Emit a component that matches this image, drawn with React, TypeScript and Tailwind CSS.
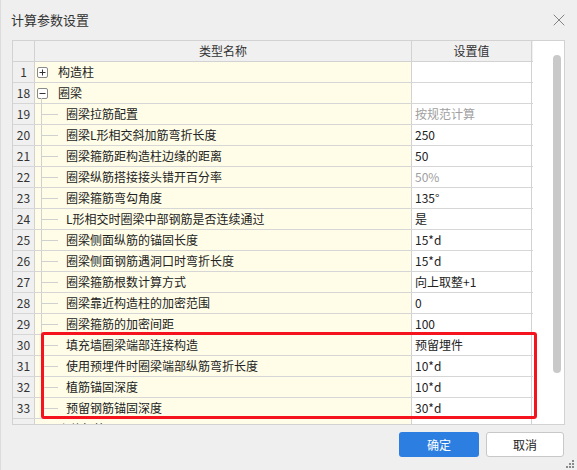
import { X } from 'lucide-react'

type Row = {
  no: number
  name: string
  value?: string
  muted?: boolean
  kind?: 'open' | 'closed' | 'child'
  last?: boolean
}

const rows: Row[] = [
  { no: 1, name: '构造柱', kind: 'closed' },
  { no: 18, name: '圈梁', kind: 'open' },
  { no: 19, name: '圈梁拉筋配置', value: '按规范计算', muted: true, kind: 'child' },
  { no: 20, name: '圈梁L形相交斜加筋弯折长度', value: '250', kind: 'child' },
  { no: 21, name: '圈梁箍筋距构造柱边缘的距离', value: '50', kind: 'child' },
  { no: 22, name: '圈梁纵筋搭接接头错开百分率', value: '50%', muted: true, kind: 'child' },
  { no: 23, name: '圈梁箍筋弯勾角度', value: '135°', kind: 'child' },
  { no: 24, name: 'L形相交时圈梁中部钢筋是否连续通过', value: '是', kind: 'child' },
  { no: 25, name: '圈梁侧面纵筋的锚固长度', value: '15*d', kind: 'child' },
  { no: 26, name: '圈梁侧面钢筋遇洞口时弯折长度', value: '15*d', kind: 'child' },
  { no: 27, name: '圈梁箍筋根数计算方式', value: '向上取整+1', kind: 'child' },
  { no: 28, name: '圈梁靠近构造柱的加密范围', value: '0', kind: 'child' },
  { no: 29, name: '圈梁箍筋的加密间距', value: '100', kind: 'child' },
  { no: 30, name: '填充墙圈梁端部连接构造', value: '预留埋件', kind: 'child' },
  { no: 31, name: '使用预埋件时圈梁端部纵筋弯折长度', value: '10*d', kind: 'child' },
  { no: 32, name: '植筋锚固深度', value: '10*d', kind: 'child' },
  { no: 33, name: '预留钢筋锚固深度', value: '30*d', kind: 'child', last: true },
  { no: 34, name: '砌体加筋', kind: 'closed' },
]

function ToggleBox({ open }: { open: boolean }) {
  return (
    <span className="flex h-[11px] w-[11px] shrink-0 items-center justify-center rounded-[2px] border border-[#8a8a8a] bg-white">
      <svg width="7" height="7" viewBox="0 0 7 7">
        <path d="M0.5 3.5h6" stroke="#333" strokeWidth="1" />
        {!open && <path d="M3.5 0.5v6" stroke="#333" strokeWidth="1" />}
      </svg>
    </span>
  )
}

function NameCell({ row }: { row: Row }) {
  if (row.kind === 'child') {
    return (
      <div className="relative flex h-full items-center pl-[31px]">
        {/* tree guide lines */}
        <span className={`absolute left-[6px] top-0 w-px bg-[#d0d0d0] ${row.last ? 'h-[10px]' : 'h-full'}`} />
        <span className="absolute left-[7px] top-[10px] h-px w-[16px] bg-[#d0d0d0]" />
        <span className="whitespace-nowrap">{row.name}</span>
      </div>
    )
  }
  return (
    <div className="relative flex h-full items-center gap-[10px] pl-[2px]">
      <ToggleBox open={row.kind === 'open'} />
      <span className="whitespace-nowrap">{row.name}</span>
      {row.kind === 'open' && <span className="absolute left-[6px] top-[15px] h-[6px] w-px bg-[#d0d0d0]" />}
    </div>
  )
}

export default function App() {
  return (
    <div
      className="relative flex h-[470px] w-[577px] flex-col overflow-hidden border-l border-[#dcdcdc] bg-[#efefef] text-[#222]"
      style={{ fontFamily: '"Noto Sans CJK SC", "Noto Sans", sans-serif' }}
    >
      {/* title bar */}
      <div className="flex h-[40px] items-center justify-between pl-[10px] pr-[8px]">
        <span className="text-[13px] text-[#333]">计算参数设置</span>
        <X className="h-[20px] w-[20px] text-[#7a7a7a]" strokeWidth={1.1} />
      </div>

      {/* grid */}
      <div className="ml-[11px] flex h-[385px] w-[553px] overflow-hidden border border-[#d2d2d2] bg-white text-[12px] leading-[16px]">
        <div className="flex w-[520px] flex-col">
          <div className="flex h-[21px] shrink-0 border-b border-[#d2d2d2] bg-[#f0f0f0] text-[#333]">
            <div className="w-[22px] shrink-0 border-r border-[#d2d2d2]" />
            <div className="flex w-[377px] shrink-0 items-center justify-center border-r border-[#d2d2d2]">类型名称</div>
            <div className="flex w-[120px] shrink-0 items-center justify-center border-r border-[#d2d2d2]">设置值</div>
          </div>
          {rows.map((row) => (
            <div key={row.no} className="flex h-[21px] shrink-0 border-b border-[#d6d6d6]">
              <div className="flex w-[22px] shrink-0 items-center justify-center border-r border-[#d2d2d2] bg-[#f0f0f0] text-[#333]">
                {row.no}
              </div>
              <div className="w-[377px] shrink-0 border-r border-[#d2d2d2] bg-[#fffde8]">
                <NameCell row={row} />
              </div>
              <div
                className={`flex w-[120px] shrink-0 items-center border-r border-[#d2d2d2] pl-[3px] ${
                  row.muted ? 'text-[#a0a0a0]' : 'text-[#222]'
                }`}
              >
                {row.value}
              </div>
            </div>
          ))}
        </div>
        {/* scrollbar */}
        <div className="flex flex-1 justify-end pr-[3px] pt-[14px]">
          <div className="h-[318px] w-[8px] rounded-full bg-[#c9c9c9]" />
        </div>
      </div>

      {/* buttons */}
      <div className="flex justify-end gap-[7px] pr-[13px] pt-[7px]">
        <button className="h-[25px] w-[80px] rounded-[3px] bg-[#2c7fe0] text-[12px] text-white">确定</button>
        <button className="h-[25px] w-[78px] rounded-[3px] border border-[#c8c8c8] bg-white text-[12px] text-[#222]">
          取消
        </button>
      </div>

      {/* resize grip */}
      <svg className="absolute bottom-[2px] right-[3px]" width="8" height="8" viewBox="0 0 8 8">
        <rect x="6" y="0" width="2" height="2" fill="#8a8a8a" />
        <rect x="3" y="3" width="2" height="2" fill="#8a8a8a" />
        <rect x="6" y="3" width="2" height="2" fill="#8a8a8a" />
        <rect x="0" y="6" width="2" height="2" fill="#8a8a8a" />
        <rect x="3" y="6" width="2" height="2" fill="#8a8a8a" />
        <rect x="6" y="6" width="2" height="2" fill="#8a8a8a" />
      </svg>

      {/* highlight annotation */}
      <div className="pointer-events-none absolute left-[40px] top-[332px] h-[87px] w-[496px] rounded-[3px] border-[3px] border-[#f5141e]" />
    </div>
  )
}
